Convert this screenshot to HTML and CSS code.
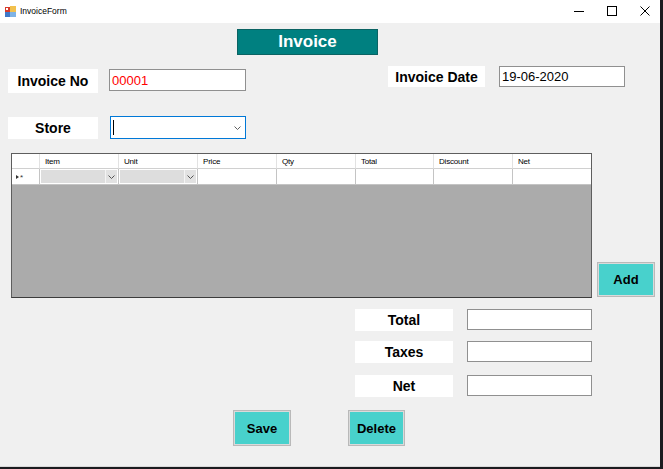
FILE: index.html
```html
<!DOCTYPE html>
<html>
<head>
<meta charset="utf-8">
<title>InvoiceForm</title>
<link rel="stylesheet" href="styles.css">
</head>
<body>
<div class="window">
  <div class="titlebar">
    <svg class="app-icon" width="11" height="11" viewBox="0 0 11 11">
      <rect x="0" y="1" width="5" height="5" fill="#d83b2b"/>
      <rect x="5" y="0" width="6" height="6" fill="#f2c14e"/>
      <rect x="0" y="6" width="5" height="5" fill="#3f78c8"/>
      <rect x="5" y="6" width="6" height="5" fill="#7fb3e6"/>
      <rect x="1" y="2" width="2" height="2" fill="#fff"/>
    </svg>
    <span class="title-text">InvoiceForm</span>
    <div class="caption-buttons">
      <svg class="cap" width="10" height="10" viewBox="0 0 10 10"><line x1="0" y1="5.5" x2="10" y2="5.5" stroke="#000" stroke-width="1"/></svg>
      <svg class="cap" width="10" height="10" viewBox="0 0 10 10"><rect x="0.5" y="0.5" width="9" height="9" fill="none" stroke="#000" stroke-width="1"/></svg>
      <svg class="cap" width="10" height="10" viewBox="0 0 10 10"><path d="M0.5 0.5 L9.5 9.5 M9.5 0.5 L0.5 9.5" stroke="#000" stroke-width="1"/></svg>
    </div>
  </div>

  <div class="client">
    <div class="header-row">
      <div class="form-title">Invoice</div>
    </div>

    <div class="row-info">
      <div class="group-left">
        <div class="label lbl-invno">Invoice No</div>
        <div class="textbox tb-invno red">00001</div>
      </div>
      <div class="group-right">
        <div class="label lbl-date">Invoice Date</div>
        <div class="textbox tb-date">19-06-2020</div>
      </div>
    </div>

    <div class="row-store">
      <div class="label lbl-store">Store</div>
      <div class="combo">
        <span class="caret"></span>
        <svg class="chev" width="7" height="4" viewBox="0 0 7 4"><path d="M0.5 0.5 L3.5 3.5 L6.5 0.5" fill="none" stroke="#606060" stroke-width="1"/></svg>
      </div>
    </div>

    <div class="row-grid">
      <div class="grid">
        <div class="grid-rows">
          <div class="hcell rowhdr"></div>
          <div class="hcell">Item</div>
          <div class="hcell">Unit</div>
          <div class="hcell">Price</div>
          <div class="hcell">Qty</div>
          <div class="hcell">Total</div>
          <div class="hcell">Discount</div>
          <div class="hcell last">Net</div>

          <div class="dcell rowhdr"><span class="tri"></span><span class="star">*</span></div>
          <div class="dcell"><div class="cellcombo"><span class="cc-btn"><svg width="7" height="4" viewBox="0 0 7 4"><path d="M0.5 0.5 L3.5 3.5 L6.5 0.5" fill="none" stroke="#555" stroke-width="1"/></svg></span></div></div>
          <div class="dcell"><div class="cellcombo"><span class="cc-btn"><svg width="7" height="4" viewBox="0 0 7 4"><path d="M0.5 0.5 L3.5 3.5 L6.5 0.5" fill="none" stroke="#555" stroke-width="1"/></svg></span></div></div>
          <div class="dcell"></div>
          <div class="dcell"></div>
          <div class="dcell"></div>
          <div class="dcell"></div>
          <div class="dcell last"></div>
        </div>
      </div>
      <div class="btn btn-add">Add</div>
    </div>

    <div class="totals">
      <div class="trow">
        <div class="label lbl-tot">Total</div>
        <div class="textbox tb-tot"></div>
      </div>
      <div class="trow r2">
        <div class="label lbl-tot">Taxes</div>
        <div class="textbox tb-tot"></div>
      </div>
      <div class="trow r3">
        <div class="label lbl-tot">Net</div>
        <div class="textbox tb-tot"></div>
      </div>
    </div>

    <div class="actions">
      <div class="btn btn-save">Save</div>
      <div class="btn btn-delete">Delete</div>
    </div>
  </div>
</div>
</body>
</html>
```

FILE: styles.css
```css
html, body {
  margin: 0;
  padding: 0;
}
body {
  background: #1b1b1f;
  width: 663px;
  height: 469px;
  overflow: hidden;
  font-family: "Liberation Sans", Arial, sans-serif;
}
.window {
  width: 660px;
  height: 467px;
  background: #f0f0f0;
  box-sizing: border-box;
  border-bottom: 1px solid #d8d8d8;
}
.titlebar {
  height: 23px;
  background: #ffffff;
  display: flex;
  align-items: center;
}
.app-icon {
  margin-left: 5px;
  margin-top: -1px;
}
.title-text {
  margin-left: 4px;
  font-family: "Liberation Sans", Arial, sans-serif;
  font-size: 8.5px;
  color: #000;
  margin-top: -1px;
}
.caption-buttons {
  margin-left: auto;
  display: flex;
  align-items: center;
  margin-right: 10px;
  gap: 23px;
  margin-top: -1px;
}
.cap { display: block; }

.client {
  display: flex;
  flex-direction: column;
}
.header-row {
  margin-top: 6px;
  padding-left: 237px;
}
.form-title {
  width: 141px;
  height: 26px;
  box-sizing: border-box;
  background: #008080;
  border: 1px solid #0b6363;
  color: #ffffff;
  font-weight: bold;
  font-size: 17px;
  display: flex;
  align-items: center;
  justify-content: center;
}

.label {
  background: #ffffff;
  font-weight: bold;
  font-size: 14px;
  color: #000;
  display: flex;
  align-items: center;
  justify-content: center;
  box-sizing: border-box;
}
.textbox {
  background: #ffffff;
  border: 1px solid #909090;
  box-sizing: border-box;
  font-size: 13px;
  color: #000;
  display: flex;
  align-items: center;
  padding-left: 2px;
}
.red { color: #ff0000; }

.row-info {
  margin-top: 11px;
  display: flex;
  height: 27px;
}
.group-left {
  display: flex;
  margin-top: 3px;
  padding-left: 8px;
}
.lbl-invno { width: 90px; height: 24px; }
.tb-invno { width: 137px; height: 22px; margin-left: 11px; }
.group-right {
  display: flex;
  margin-left: 142px;
}
.lbl-date { width: 97px; height: 21px; }
.tb-date { width: 126px; height: 21px; margin-left: 14px; }

.row-store {
  margin-top: 23px;
  display: flex;
  padding-left: 8px;
  align-items: flex-start;
}
.lbl-store { width: 90px; height: 22px; margin-top: 1px; }
.combo {
  width: 136px;
  height: 23px;
  margin-left: 12px;
  box-sizing: border-box;
  border: 1px solid #0078d7;
  background: #fff;
  display: flex;
  align-items: center;
}
.caret {
  width: 1px;
  height: 15px;
  background: #000;
  margin-left: 2px;
}
.chev { margin-left: auto; margin-right: 4px; }

.row-grid {
  margin-top: 14px;
  display: flex;
  padding-left: 11px;
  align-items: flex-end;
}
.grid {
  width: 581px;
  height: 145px;
  box-sizing: border-box;
  border: 1px solid #5e5e5e;
  border-bottom: 1px solid #3c3c3c;
  background: #ababab;
}
.grid-rows {
  display: grid;
  grid-template-columns: 28px 79px 79px 79px 79px 78px 79px 78px;
  grid-template-rows: 15px 16px;
}
.hcell {
  background: #fff;
  border-right: 1px solid #e2e2e2;
  border-bottom: 1px solid #d0d0d0;
  font-size: 8px;
  color: #000;
  padding-left: 5px;
  display: flex;
  align-items: center;
  letter-spacing: -0.2px;
}
.hcell.last, .dcell.last { border-right: none; }
.dcell {
  background: #fff;
  border-right: 1px solid #c4c4c4;
  border-bottom: 1px solid #c4c4c4;
  display: flex;
  align-items: center;
}
.rowhdr {
  padding-left: 3px;
}
.tri {
  width: 0;
  height: 0;
  border-top: 2px solid transparent;
  border-bottom: 2px solid transparent;
  border-left: 3px solid #333;
  margin-left: 1px;
}
.star {
  font-size: 8px;
  color: #333;
  margin-left: 1px;
  margin-top: 2px;
}
.cellcombo {
  margin: 1px;
  width: 100%;
  height: 13px;
  background: #dddddd;
  display: flex;
  justify-content: flex-end;
}
.cc-btn {
  width: 11px;
  height: 13px;
  border-left: 1px solid #f4f4f4;
  display: flex;
  align-items: center;
  justify-content: center;
  background: #e2e2e2;
}
.cc-btn svg { display: block; }

.btn {
  background: #48d1cc;
  border: 1px solid #b9b9b9;
  box-shadow: inset 0 0 0 1px #dadada;
  box-sizing: border-box;
  font-weight: bold;
  font-size: 13px;
  color: #000;
  display: flex;
  align-items: center;
  justify-content: center;
}
.btn-add {
  width: 58px;
  height: 35px;
  margin-left: 5px;
  margin-bottom: 1px;
}

.totals {
  margin-top: 11px;
  padding-left: 355px;
  display: flex;
  flex-direction: column;
}
.trow {
  display: flex;
  align-items: flex-start;
}
.trow.r2 { margin-top: 10px; }
.trow.r3 { margin-top: 12px; }
.lbl-tot { width: 98px; height: 22px; }
.tb-tot { width: 125px; height: 21px; margin-left: 14px; }

.actions {
  margin-top: 13px;
  padding-left: 233px;
  display: flex;
}
.btn-save { width: 58px; height: 36px; }
.btn-delete { width: 57px; height: 36px; margin-left: 57px; }
```
